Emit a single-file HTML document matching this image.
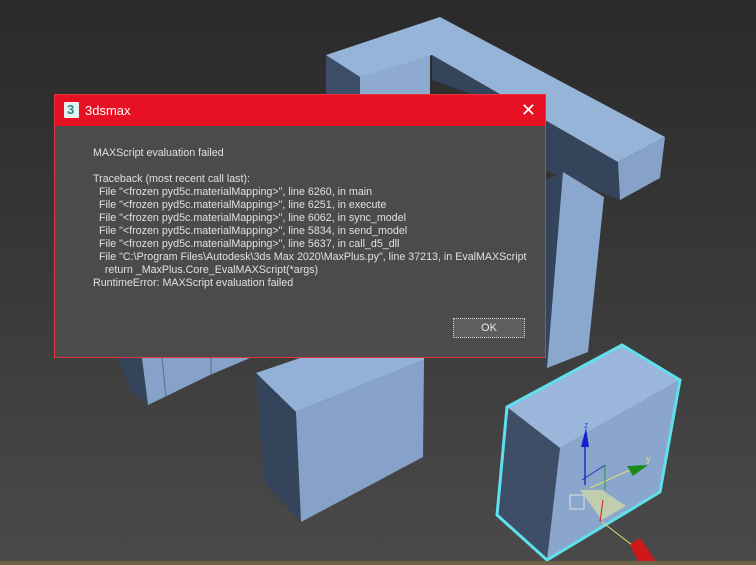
<!DOCTYPE html>
<html><head><meta charset="utf-8"><style>
html,body{margin:0;padding:0;}
body{width:756px;height:565px;overflow:hidden;position:relative;background:linear-gradient(#2a2a2a 0%,#363636 40%,#4a4a4a 100%);font-family:"Liberation Sans",sans-serif;}
svg{position:absolute;left:0;top:0;}
#dlg{position:absolute;left:54px;top:94px;width:490px;height:262px;border:1px solid #e8323c;background:#4b4b4b;}
#tb{height:31px;background:#e81123;position:relative;}
#tb .ic{position:absolute;left:9px;top:7px;width:15px;height:16px;background:#e8f0ee;border-radius:1px;}
#tb .ic b{position:absolute;left:3px;top:0;font-size:13px;color:#1a8f84;font-weight:bold;}
#tb .t{position:absolute;left:30px;top:8px;font-size:13px;color:#fff;}
#tb .x{position:absolute;right:9px;top:5px;font-size:18px;color:#fff;}
#txt{position:absolute;left:38px;top:52px;font-size:10.7px;line-height:13px;color:#e0e0e0;white-space:pre;}
#ok{position:absolute;left:398px;top:223px;width:70px;height:18px;background:#5e5e5e;border:1px dotted #ccc;color:#e8e8e8;font-size:11px;text-align:center;line-height:18px;}
</style></head><body>
<svg width="756" height="565" viewBox="0 0 756 565">
<!-- top L -->
<polygon points="326,55 360,77 360,120 326,120" fill="#3d4e66"/>
<polygon points="360,77 430,53 430,120 360,120" fill="#8eaad0"/>
<polygon points="432,55 618,162 620,200 545,170 545,120 432,80" fill="#34445a"/>
<polygon points="326,55 440,17 665,137 618,162 432,55 360,77" fill="#96b3d8"/>
<polygon points="618,162 665,137 660,178 620,200" fill="#86a2c8"/>
<polygon points="545,180 563,172 548,368 545,368" fill="#34445a"/>
<polygon points="563,172 604,197 588,352 547,368" fill="#8aa7cd"/>
<!-- left piece -->
<polygon points="118,358 142,358 148,405 130,390" fill="#34445a"/>
<polygon points="142,358 250,358 210,375 148,405" fill="#86a2c8"/>
<line x1="162" y1="358" x2="166" y2="397" stroke="#5a6e8a" stroke-width="1"/>
<line x1="211" y1="358" x2="211" y2="375" stroke="#5a6e8a" stroke-width="1"/>
<!-- bottom box -->
<polygon points="256,373 300,358 424,358 424,360 296,412" fill="#93b0d6"/>
<polygon points="256,373 296,412 301,522 264,482" fill="#34445a"/>
<polygon points="296,412 424,360 423,457 301,522" fill="#86a2c8"/>
<!-- selected box -->
<polygon points="507,407 560,448 547,560 497,515" fill="#3d4e66"/>
<polygon points="560,448 680,380 660,492 547,560" fill="#8aa6cc"/>
<polygon points="507,407 622,345 680,380 560,448" fill="#9ab6db"/>
<polygon points="507,407 622,345 680,380 660,492 547,560 497,515" fill="none" stroke="#5fe0ec" stroke-width="3"/>
<!-- gizmo -->
<polygon points="580,490 602,490 626,506 602,520" fill="#d8e0a0" opacity="0.7"/>
<rect x="570" y="495" width="14" height="14" fill="none" stroke="#ddd" stroke-width="1"/>
<line x1="585" y1="485" x2="585" y2="440" stroke="#2030c0" stroke-width="1.5"/>
<polygon points="581,447 589,447 586,428" fill="#1022d0"/>
<text x="584" y="428" font-size="9" fill="#4050ff" font-family="Liberation Sans">z</text>
<line x1="590" y1="488" x2="630" y2="470" stroke="#e0e070" stroke-width="1"/>
<polygon points="627,466 633,476 648,465" fill="#1c8a1c"/>
<text x="646" y="462" font-size="9" fill="#e8e060" font-family="Liberation Sans">y</text>
<line x1="602" y1="522" x2="636" y2="548" stroke="#e0e070" stroke-width="1"/>
<polygon points="630,545 640,538 655,560 650,565 640,565" fill="#d01818"/>
<line x1="582" y1="480" x2="605" y2="465" stroke="#2030c0" stroke-width="1"/>
<line x1="605" y1="465" x2="605" y2="490" stroke="#20a020" stroke-width="1"/>
<line x1="603" y1="500" x2="600" y2="522" stroke="#d02020" stroke-width="1"/>
<rect x="0" y="561" width="756" height="4" fill="#6b6448"/>
</svg>
<div id="dlg">
<div id="tb"><div class="ic"><b>3</b></div><div class="t">3dsmax</div><div class="x">✕</div></div>
<div id="txt">MAXScript evaluation failed

Traceback (most recent call last):
  File "&lt;frozen pyd5c.materialMapping&gt;", line 6260, in main
  File "&lt;frozen pyd5c.materialMapping&gt;", line 6251, in execute
  File "&lt;frozen pyd5c.materialMapping&gt;", line 6062, in sync_model
  File "&lt;frozen pyd5c.materialMapping&gt;", line 5834, in send_model
  File "&lt;frozen pyd5c.materialMapping&gt;", line 5637, in call_d5_dll
  File "C:\Program Files\Autodesk\3ds Max 2020\MaxPlus.py", line 37213, in EvalMAXScript
    return _MaxPlus.Core_EvalMAXScript(*args)
RuntimeError: MAXScript evaluation failed</div>
<div id="ok">OK</div>
</div>
</body></html>
